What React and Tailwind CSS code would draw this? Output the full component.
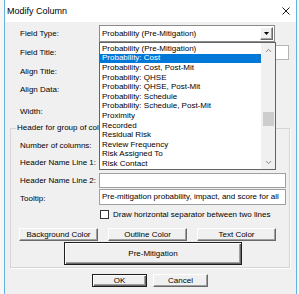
import { ChevronUp, ChevronDown } from 'lucide-react'

const OPTIONS = [
  'Probability (Pre-Mitigation)',
  'Probability: Cost',
  'Probability: Cost, Post-Mit',
  'Probability: QHSE',
  'Probability: QHSE, Post-Mit',
  'Probability: Schedule',
  'Probability: Schedule, Post-Mit',
  'Proximity',
  'Recorded',
  'Residual Risk',
  'Review Frequency',
  'Risk Assigned To',
  'Risk Contact',
]

function Btn({ children, className = '', primary = false }) {
  const face = primary
    ? 'border border-[#1e1e1e] shadow-[inset_1px_1px_0_#ffffff,inset_-1px_-1px_0_#696969,inset_-2px_-2px_0_#a0a0a0]'
    : 'border border-t-white border-l-white border-b-[#696969] border-r-[#696969] shadow-[inset_-1px_-1px_0_#a0a0a0]'
  return (
    <div className={`flex items-center justify-center bg-[#f0f0f0] text-[8px] leading-none text-black ${face} ${className}`}>
      {children}
    </div>
  )
}

function Label({ children }) {
  return <span className="w-[79px] shrink-0 text-[8px] leading-none text-black">{children}</span>
}

export default function App() {
  return (
    <div className="flex h-[294px] w-[299px] overflow-hidden bg-[#f7f7f7] font-['Liberation_Sans',Arial,sans-serif]">
      <div className="ml-[4px] flex h-full w-[293px] shrink-0 flex-col border-x border-[#62b2d9] bg-[#f0f0f0]">
        {/* title bar */}
        <div className="flex h-[22px] shrink-0 items-center justify-between bg-white pl-[2px] pr-[6px]">
          <span className="text-[9px] leading-none text-black">Modify Column</span>
          <svg width="8" height="8" viewBox="0 0 8 8" className="mb-[1px]">
            <path d="M0.5 0.5 L7.5 7.5 M7.5 0.5 L0.5 7.5" stroke="#1a1a1a" strokeWidth="1" fill="none" />
          </svg>
        </div>

        <div className="relative flex flex-col">
          {/* Field Type */}
          <div className="mt-[3px] flex h-[17px] items-center pl-[15px]">
            <Label>Field Type:</Label>
            <div className="flex h-[17px] w-[176px] items-center justify-between border border-[#8c8c8c] bg-white pl-[2px] pr-[1px]">
              <span className="text-[8px] leading-none text-black">Probability (Pre-Mitigation)</span>
              <div className="flex h-[13px] w-[13px] items-center justify-center border border-t-white border-l-white border-b-[#696969] border-r-[#696969] bg-[#f0f0f0] shadow-[inset_-1px_-1px_0_#a0a0a0]">
                <svg width="5" height="3" viewBox="0 0 5 3">
                  <path d="M0 0 H5 L2.5 3 Z" fill="#000" />
                </svg>
              </div>
            </div>
          </div>

          <div className="mt-[2px] flex h-[17px] items-center pl-[15px]">
            <Label>Field Title:</Label>
            <div className="h-[15px] w-[190px] border border-[#b4b4b4] bg-white" />
          </div>
          <div className="mt-[2px] flex h-[17px] items-center pl-[15px]">
            <Label>Align Title:</Label>
          </div>
          <div className="mt-[1px] flex h-[17px] items-center pl-[15px]">
            <Label>Align Data:</Label>
          </div>
          <div className="mt-[5px] flex h-[17px] items-center pl-[15px]">
            <Label>Width:</Label>
          </div>

          {/* group box */}
          <div className="relative ml-[5px] mt-[8px] w-[280px] border border-[#d5d5d5] pb-[2px] shadow-[1px_1px_0_#ffffff]">
            <span className="absolute -top-[5px] left-[5px] w-[83px] overflow-hidden whitespace-nowrap bg-[#f0f0f0] px-[1px] text-[8px] leading-none text-black">
              Header for group of columns
            </span>
            <div className="mt-[8px] flex h-[17px] items-center pl-[9px]">
              <Label>Number of columns:</Label>
            </div>
            <div className="flex h-[17px] items-center pl-[9px]">
              <Label>Header Name Line 1:</Label>
            </div>
            <div className="mt-[2px] flex h-[15px] items-center pl-[9px]">
              <Label>Header Name Line 2:</Label>
              <div className="h-[15px] w-[187px] border border-[#a0a0a0] bg-white" />
            </div>
            <div className="mt-[1px] flex h-[16px] items-center pl-[9px]">
              <span className="mt-[3px] w-[79px] shrink-0 text-[8px] leading-none text-black">Tooltip:</span>
              <div className="flex h-[16px] w-[187px] items-center overflow-hidden border border-[#a0a0a0] bg-white pl-[2px]">
                <span className="whitespace-nowrap text-[8px] leading-none text-black">
                  Pre-mitigation probability, impact, and score for all
                </span>
              </div>
            </div>
            <div className="mt-[5px] flex h-[9px] items-center pl-[89px]">
              <div className="h-[9px] w-[9px] border border-[#333333] bg-white" />
              <span className="ml-[4px] text-[8px] leading-none text-black">
                Draw horizontal separator between two lines
              </span>
            </div>
            <div className="mt-[9px] flex gap-[10px] pl-[8px]">
              <Btn className="h-[13px] w-[79px]">Background Color</Btn>
              <Btn className="h-[13px] w-[79px]">Outline Color</Btn>
              <Btn className="h-[13px] w-[79px]">Text Color</Btn>
            </div>
            <div className="mt-[1px] pl-[53px]">
              <Btn primary className="h-[23px] w-[178px]">Pre-Mitigation</Btn>
            </div>
          </div>

          <div className="mt-[6px] flex gap-[6px] pl-[87px]">
            <Btn primary className="h-[13px] w-[55px]">OK</Btn>
            <Btn className="h-[13px] w-[55px]">Cancel</Btn>
          </div>

          {/* open dropdown list */}
          <div className="absolute left-[94px] top-[20px] flex h-[128px] w-[177px] border border-[#646464] bg-white">
            <div className="flex flex-1 flex-col pt-[1px]">
              {OPTIONS.map((opt, i) => (
                <div
                  key={opt}
                  className={`flex h-[9.6px] items-center pl-[2px] text-[8px] leading-none ${
                    i === 1 ? 'bg-[#0078d7] text-white' : 'text-black'
                  }`}
                >
                  {opt}
                </div>
              ))}
            </div>
            <div className="flex w-[14px] flex-col items-center bg-[#f0f0f0]">
              <div className="flex h-[14px] items-center justify-center">
                <ChevronUp size={9} strokeWidth={2} className="text-[#606060]" />
              </div>
              <div className="mt-[55px] h-[14px] w-[11px] bg-[#cdcdcd]" />
              <div className="flex-1" />
              <div className="flex h-[14px] items-center justify-center">
                <ChevronDown size={9} strokeWidth={2} className="text-[#606060]" />
              </div>
            </div>
          </div>
        </div>
      </div>
    </div>
  )
}
